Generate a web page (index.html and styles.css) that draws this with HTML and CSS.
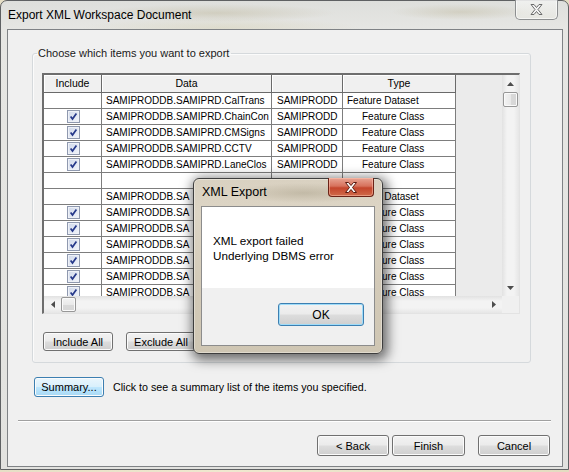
FILE: index.html
```html
<!DOCTYPE html>
<html>
<head>
<meta charset="utf-8">
<link rel="stylesheet" href="styles.css">
</head>
<body>
<div class="screen">
  <div class="window">
    <div class="titlebar">
      <span class="title">Export XML Workspace Document</span>
      <div class="glass-close">
        <svg width="13" height="11" viewBox="0 0 13 11"><path d="M1 0.5h3l2.5 3 2.5-3h3l-4 5 4 5h-3l-2.5-3-2.5 3h-3l4-5z" fill="#f4f4f4" stroke="#6b6b6b" stroke-width="1"/></svg>
      </div>
    </div>
    <div class="client">
      <fieldset class="group">
        <legend>Choose which items you want to export</legend>
        <div class="list">
          <div class="view">
            <div class="row head">
              <div class="cell">Include</div>
              <div class="cell">Data</div>
              <div class="cell"></div>
              <div class="cell">Type</div>
            </div>
            <div class="row">
              <div class="cell"></div>
              <div class="cell data">SAMIPRODDB.SAMIPRD.CalTrans</div>
              <div class="cell owner">SAMIPRODD</div>
              <div class="cell type">Feature Dataset</div>
            </div>
            <div class="row">
              <div class="cell chk"><span class="cb"></span></div>
              <div class="cell data">SAMIPRODDB.SAMIPRD.ChainCon</div>
              <div class="cell owner">SAMIPRODD</div>
              <div class="cell type sub">Feature Class</div>
            </div>
            <div class="row">
              <div class="cell chk"><span class="cb"></span></div>
              <div class="cell data">SAMIPRODDB.SAMIPRD.CMSigns</div>
              <div class="cell owner">SAMIPRODD</div>
              <div class="cell type sub">Feature Class</div>
            </div>
            <div class="row">
              <div class="cell chk"><span class="cb"></span></div>
              <div class="cell data">SAMIPRODDB.SAMIPRD.CCTV</div>
              <div class="cell owner">SAMIPRODD</div>
              <div class="cell type sub">Feature Class</div>
            </div>
            <div class="row">
              <div class="cell chk"><span class="cb"></span></div>
              <div class="cell data">SAMIPRODDB.SAMIPRD.LaneClos</div>
              <div class="cell owner">SAMIPRODD</div>
              <div class="cell type sub">Feature Class</div>
            </div>
            <div class="row">
              <div class="cell"></div>
              <div class="cell data"></div>
              <div class="cell owner"></div>
              <div class="cell type"></div>
            </div>
            <div class="row">
              <div class="cell"></div>
              <div class="cell data">SAMIPRODDB.SA</div>
              <div class="cell owner"></div>
              <div class="cell type">Feature Dataset</div>
            </div>
            <div class="row">
              <div class="cell chk"><span class="cb"></span></div>
              <div class="cell data">SAMIPRODDB.SA</div>
              <div class="cell owner"></div>
              <div class="cell type sub">Feature Class</div>
            </div>
            <div class="row">
              <div class="cell chk"><span class="cb"></span></div>
              <div class="cell data">SAMIPRODDB.SA</div>
              <div class="cell owner"></div>
              <div class="cell type sub">Feature Class</div>
            </div>
            <div class="row">
              <div class="cell chk"><span class="cb"></span></div>
              <div class="cell data">SAMIPRODDB.SA</div>
              <div class="cell owner"></div>
              <div class="cell type sub">Feature Class</div>
            </div>
            <div class="row">
              <div class="cell chk"><span class="cb"></span></div>
              <div class="cell data">SAMIPRODDB.SA</div>
              <div class="cell owner"></div>
              <div class="cell type sub">Feature Class</div>
            </div>
            <div class="row">
              <div class="cell chk"><span class="cb"></span></div>
              <div class="cell data">SAMIPRODDB.SA</div>
              <div class="cell owner"></div>
              <div class="cell type sub">Feature Class</div>
            </div>
            <div class="row">
              <div class="cell chk"><span class="cb"></span></div>
              <div class="cell data">SAMIPRODDB.SA</div>
              <div class="cell owner"></div>
              <div class="cell type sub">Feature Class</div>
            </div>
          </div>
          <div class="vscroll">
            <span class="sb-btn"><svg width="7" height="4" viewBox="0 0 7 4"><path d="M0 4L3.5 0L7 4z" fill="#4d4d4d"/></svg></span>
            <span class="thumb v"></span>
            <span class="track"></span>
            <span class="sb-btn"><svg width="7" height="4" viewBox="0 0 7 4"><path d="M0 0L3.5 4L7 0z" fill="#4d4d4d"/></svg></span>
          </div>
          <div class="hscroll">
            <span class="sb-btn"><svg width="4" height="7" viewBox="0 0 4 7"><path d="M4 0L0 3.5L4 7z" fill="#4d4d4d"/></svg></span>
            <span class="thumb h"></span>
            <span class="track"></span>
            <span class="sb-btn"><svg width="4" height="7" viewBox="0 0 4 7"><path d="M0 0L4 3.5L0 7z" fill="#4d4d4d"/></svg></span>
          </div>
          <div class="corner"></div>
        </div>
        <div class="group-buttons">
          <button class="btn w70">Include All</button>
          <button class="btn w70">Exclude All</button>
        </div>
      </fieldset>
      <div class="summary-row">
        <button class="btn hot w70">Summary...</button>
        <span class="hint">Click to see a summary list of the items you specified.</span>
      </div>
      <div class="separator"></div>
      <div class="nav">
        <button class="btn nav-btn">&lt; Back</button>
        <button class="btn nav-btn finish">Finish</button>
        <button class="btn nav-btn cancel">Cancel</button>
      </div>
    </div>
  </div>

  <div class="msgbox">
    <div class="msg-title">
      <span class="msg-caption">XML Export</span>
      <div class="red-close">
        <svg width="14" height="11" viewBox="0 0 14 11"><path d="M1.5 0.5h3l2.5 3 2.5-3h3l-4 5 4 5h-3l-2.5-3-2.5 3h-3l4-5z" fill="#ffffff" stroke="#5a1a10" stroke-width="1"/></svg>
      </div>
    </div>
    <div class="msg-client">
      <div class="msg-body">
        <div>XML export failed</div>
        <div>Underlying DBMS error</div>
      </div>
      <div class="msg-foot">
        <button class="btn default ok">OK</button>
      </div>
    </div>
  </div>
</div>
</body>
</html>
```
FILE: styles.css
```css
* { box-sizing: border-box; }
html, body { margin: 0; padding: 0; }
body {
  font-family: "Liberation Sans", Arial, sans-serif;
  background: #e9e2c9;
}
.screen {
  position: relative;
  width: 569px;
  height: 472px;
  overflow: hidden;
  background: linear-gradient(90deg, #e6dfc6, #efe8cf 40%, #e4dcc1);
}
.window {
  width: 569px;
  height: 470px;
  border: 1px solid #5f6163;
  border-radius: 7px 7px 0 0;
  background:
    radial-gradient(ellipse 120px 9px at 215px 12px, rgba(170,160,120,0.30), transparent),
    radial-gradient(ellipse 70px 8px at 460px 11px, rgba(170,160,120,0.28), transparent),
    radial-gradient(ellipse 140px 10px at 220px 27px, rgba(200,190,140,0.25), transparent),
    linear-gradient(180deg, #dedfdc 0px, #e6e6e3 28px, #e2e2df 100%);
  display: flex;
  flex-direction: column;
}
.titlebar {
  height: 28px;
  display: flex;
  align-items: flex-start;
}
.title {
  font-size: 12px;
  line-height: 28px;
  padding-left: 7px;
  color: #000;
}
.glass-close {
  margin-left: auto;
  margin-right: 10px;
  margin-top: -1px;
  width: 43px;
  height: 20px;
  border: 1px solid #8d8f90;
  border-top: none;
  border-radius: 0 0 5px 5px;
  background: linear-gradient(180deg, rgba(255,255,255,0.55), rgba(235,235,225,0.4));
  box-shadow: inset 0 0 0 1px rgba(255,255,255,0.6);
  display: flex;
  align-items: center;
  justify-content: center;
}
.client {
  margin: 0 5px 0 6px;
  border: 1px solid #7f8285;
  background: #f0f0f0;
  display: flex;
  flex-direction: column;
  padding-bottom: 10px;
}
.group {
  margin: 16px 0 0 24px;
  width: 499px;
  border: 1px solid #d5d9dc;
  border-radius: 3px;
  box-shadow: inset 1px 1px 0 #fbfbfb;
  padding: 13px 10px 11px 9px;
  min-width: 0;
}
.group legend {
  font-size: 11px;
  line-height: 14px;
  padding: 0 2px 0 1px;
  margin-left: -5px;
  color: #1a1a1a;
}
.list {
  width: 478px;
  height: 241px;
  border-top: 2px solid #6e6e6e;
  border-left: 2px solid #6e6e6e;
  border-right: 1px solid #e3e3e3;
  border-bottom: 1px solid #e3e3e3;
  display: grid;
  grid-template-columns: 458px 17px;
  grid-template-rows: 221px 17px;
  background: #ebebeb;
}
.view {
  overflow: hidden;
  background: #ebebeb;
  font-size: 10px;
  color: #000;
}
.row {
  display: grid;
  grid-template-columns: 58px 170px 71px 113px;
  height: 16px;
}
.cell {
  border-right: 1px solid #7d7d7d;
  border-bottom: 1px solid #7d7d7d;
  background: #fff;
  line-height: 16px;
  white-space: nowrap;
  overflow: hidden;
}
.row.head { height: 18px; }
.row.head .cell {
  background: #f0f0f0;
  border-color: #6a6a6a;
  box-shadow: inset 1px 1px 0 #fff;
  line-height: 17px;
  text-align: center;
  font-size: 10.5px;
}
.data { padding-left: 4px; }
.owner { padding-left: 5px; }
.type { padding-left: 4px; }
.type.sub { padding-left: 19px; }
.chk {
  display: flex;
  align-items: center;
  justify-content: center;
}
.cb {
  width: 13px;
  height: 13px;
  margin-left: 1px;
  border: 1px solid #8f99af;
  background:
    url("data:image/svg+xml;utf8,<svg xmlns='http://www.w3.org/2000/svg' width='11' height='11' viewBox='0 0 11 11'><path d='M2.6 5.4 L4.5 8 L8.4 2.4' stroke='%2326398a' stroke-width='1.7' fill='none'/></svg>") center/11px 11px no-repeat,
    linear-gradient(135deg, #cfd8ea, #f2f5fb);
  box-shadow: inset 0 0 0 1px #eef1f7;
}
.vscroll {
  display: flex;
  flex-direction: column;
  background: linear-gradient(90deg, #e2e2e2, #f3f3f3 30%, #f3f3f3 70%, #e6e6e6);
}
.hscroll {
  display: flex;
  flex-direction: row;
  background: linear-gradient(180deg, #e2e2e2, #f3f3f3 30%, #f3f3f3 70%, #e6e6e6);
}
.corner { background: #f0f0f0; }
.sb-btn {
  flex: 0 0 17px;
  display: flex;
  align-items: center;
  justify-content: center;
}
.track { flex: 1; }
.thumb {
  border: 1px solid #979797;
  border-radius: 2px;
  background: linear-gradient(90deg, #f3f3f3, #e9e9e9 50%, #d9d9d9 51%, #d6d6d6);
  box-shadow: inset 0 0 0 1px #fafafa;
}
.thumb.v { height: 15px; margin: 0 1px; }
.thumb.h { width: 15px; margin: 1px 0; background: linear-gradient(180deg, #f3f3f3, #e9e9e9 50%, #d9d9d9 51%, #d6d6d6); }
.btn {
  font-family: "Liberation Sans", Arial, sans-serif;
  font-size: 11px;
  color: #000;
  height: 19px;
  padding: 0;
  border: 1px solid #707070;
  border-radius: 3px;
  background: linear-gradient(180deg, #f2f2f2 0%, #ebebeb 48%, #dddddd 52%, #cfcfcf 100%);
  box-shadow: inset 0 0 0 1px #fbfbfb;
  text-align: center;
}
.w70 { width: 70px; }
.group-buttons {
  margin-top: 18px;
  margin-left: 1px;
  display: flex;
  gap: 13px;
}
.summary-row {
  margin: 14px 0 0 26px;
  display: flex;
  align-items: center;
  gap: 9px;
}
.btn.hot {
  height: 20px;
  border-color: #3c7fb1;
  background: linear-gradient(180deg, #eaf6fd 0%, #d9f0fc 48%, #bee6fd 52%, #a7d9f5 100%);
}
.hint {
  font-size: 10.7px;
  color: #000;
}
.separator {
  margin: 23px 11px 0 10px;
  border-top: 1px solid #a0a0a0;
  border-bottom: 1px solid #ffffff;
}
.nav {
  margin-top: 13px;
  padding-right: 12px;
  display: flex;
  justify-content: flex-end;
}
.nav-btn { width: 72px; height: 21px; }
.nav-btn.finish { width: 73px; margin-left: 3px; }
.nav-btn.cancel { margin-left: 13px; }

/* message box */
.msgbox {
  position: absolute;
  left: 193px;
  top: 178px;
  width: 190px;
  height: 176px;
  border: 1px solid #3e3e3e;
  border-radius: 6px;
  background:
    radial-gradient(ellipse 70px 10px at 110px 14px, rgba(150,140,115,0.35), transparent),
    linear-gradient(180deg, #d9d1c1 0%, #ddd5c5 20%, #d3cab8 60%, #cfc6b3 100%);
  box-shadow: 0 0 0 1px rgba(255,255,255,0.35) inset, 2px 3px 12px 3px rgba(0,0,0,0.55);
  display: flex;
  flex-direction: column;
  padding: 0 7px 7px 7px;
}
.msg-title {
  height: 27px;
  display: flex;
  align-items: flex-start;
}
.msg-caption {
  font-size: 12.5px;
  line-height: 26px;
  padding-left: 1px;
  color: #000;
}
.red-close {
  margin-left: auto;
  margin-top: -1px;
  margin-right: 1px;
  width: 46px;
  height: 19px;
  border: 1px solid #6b2216;
  border-top: none;
  border-radius: 0 0 4px 4px;
  background: linear-gradient(180deg, #e8a493 0%, #d7715c 45%, #c4452c 55%, #cf6a4a 100%);
  box-shadow: inset 0 0 0 1px rgba(255,200,180,0.5);
  display: flex;
  align-items: center;
  justify-content: center;
}
.msg-client {
  flex: 1;
  border: 1px solid #8c8c8c;
  background: #f0f0f0;
  display: flex;
  flex-direction: column;
}
.msg-body {
  height: 81px;
  background: #fff;
  padding: 26px 0 0 11px;
  font-size: 11.7px;
  line-height: 15px;
  color: #000;
}
.msg-foot {
  flex: 1;
  display: flex;
  justify-content: flex-end;
  align-items: flex-start;
  padding: 15px 10px 0 0;
}
.btn.ok {
  width: 86px;
  height: 23px;
  font-size: 12px;
}
.btn.default {
  border-color: #3c7fb1;
  box-shadow: inset 0 0 0 1px #9fdcf9;
}
```
